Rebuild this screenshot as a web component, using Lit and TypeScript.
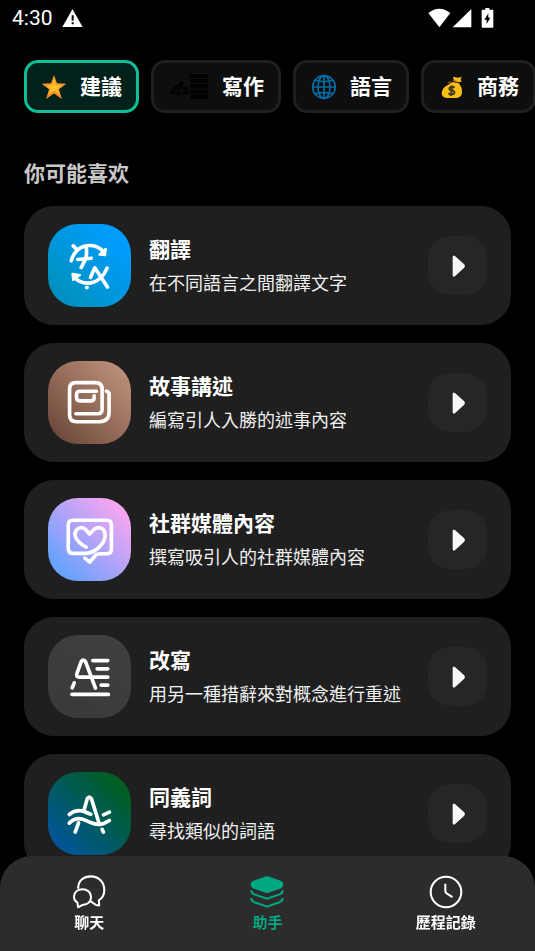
import { LitElement, html, svg, css, TemplateResult } from "lit";
import { customElement, property, state } from "lit/decorators.js";
import { classMap } from "lit/directives/class-map.js";

const starIcon = html`<svg width="25" height="25" viewBox="125 223 75 75" aria-hidden="true">
  <path d="M164 226 L173 251 L201 252 L179 269 L187 297 L164 281 L141 297 L149 269 L127 252 L155 251 Z" fill="#f19a2c"/>
  <path d="M164 240 L170 257 L187 258 L174 268 L179 284 L164 275 L149 284 L154 268 L141 258 L158 257 Z" fill="#fdc02a"/>
  <path d="M187 297 L164 281 L141 297 L144 287 L164 274 L184 287 Z" fill="#fb8c1e"/>
</svg>`;

const writingIcon = html`<svg width="40" height="25" viewBox="504 222 120 75" aria-hidden="true">
  <g fill="none" stroke="#010101" stroke-width="5" stroke-linejoin="round" stroke-linecap="round">
    <path d="M512 280 L546 246 M515 272 Q524 258 536 258 L551 263 L562 264 L562 280 L549 280 L541 283 L521 282 Q530 274 540 274 M529 268 L541 267 M552 264 V279"/>
    <path d="M536 254 L544 245 L550 250 L540 260" fill="#010101"/>
  </g>
  <path d="M571 222h53v12h-53z M571 237h53v12h-53z M571 253h53v12h-53z M571 269h53v12h-53z M571 284h53v12h-53z" fill="#010101"/>
</svg>`;

const globeIcon = html`<svg width="26" height="26" viewBox="136 222 78 78" aria-hidden="true">
  <g fill="none" stroke="#066ba3" stroke-width="5">
    <circle cx="178" cy="261" r="34"/>
    <ellipse cx="178" cy="261" rx="18" ry="34"/>
    <path d="M178 227v68 M144 261h68 M150 240q28 10 56 0 M150 282q28 -10 56 0"/>
  </g>
</svg>`;

const moneyIcon = html`<svg width="25" height="25" viewBox="519 222 75 75" aria-hidden="true">
  <path d="M564 230 L580 233 L590 230 L587 239 L590 246 L577 247 L567 243 Z" fill="#f4b81e"/>
  <path d="M562 246 L581 250 Q592 261 591 279 Q589 293 574 294 L545 294 Q530 292 530 279 Q532 261 550 254 Z" fill="#fdbf14"/>
  <path d="M562 240 L577 247 M548 249 L558 246" fill="none" stroke="#8a4c25" stroke-width="4"/>
  <path d="M569 263 Q561 258 555 262 Q549 269 560 271 Q572 274 567 281 Q560 286 550 280 M562 256 L557 288" fill="none" stroke="#463918" stroke-width="6"/>
</svg>`;

const translateArt = svg`
  <path d="M93 134 Q102 100 132 90 Q165 82 188 104 M99 89 L111 101 M138 94 Q142 115 134 133 L123 154 M113 130 L153 126"/>
  <path d="M103 184 Q118 203 150 201 Q184 196 201 156 M151 184 L164 155 L202 213"/>
  <path d="M178 115 L197 98 L195 117 Z M97 173 L119 177 L99 191 Z" fill="#fff" stroke-width="7"/>
  <path d="M140 214 v0.1" stroke-width="12"/>`;

const storyArt = svg`
  <path d="M107 182 H173 Q186 181 186 168 V108 Q186 88 166 88 H107 Q88 88 88 108 V187 Q89 206 109 206 H178 Q207 204 207 178 V122 Q207 116 199 114"/>
  <path d="M169 114 H119 Q109 114 109 123 V134 Q109 143 119 143 H154 Q162 143 162 134 V128"/>`;

const socialArt = svg`
  <path d="M134 204 L149 216 L165 197 Q169 191 179 191 H199 Q214 190 214 177 V104 Q214 90 200 90 H98 Q84 90 84 104 V174 Q84 190 100 190 H138 Q163 188 181 167 C201 144 197 124 187 116 Q170 104 148 132 Q130 103 112 116 C96 131 106 154 138 171"/>`;

const rewriteArt = svg`
  <path d="M95 202 H205 M96 182 L102 167 M158 100 H203 M171 125 H203 M183 174 H203 M203 150 H118 Q106 150 110 139 L123 103 Q129 94 136 103 L166 183"/>`;

const synonymArt = svg`
  <path d="M87 151 Q108 134 132 142 Q145 148 152 150 M190 152 L208 144"/>
  <path d="M87 177 Q105 159 127 165 L153 176 Q180 188 208 169"/>
  <path d="M132 136 L141 104 Q147 93 154 104 L178 181 M186 196 L190 204 M115 176 L105 204"/>`;

interface Category {
  label: string;
  icon: TemplateResult;
}

interface Assistant {
  title: string;
  text: string;
  tone: string;
  art: unknown;
}

const categories: Category[] = [
  { label: "建議", icon: starIcon },
  { label: "寫作", icon: writingIcon },
  { label: "語言", icon: globeIcon },
  { label: "商務", icon: moneyIcon },
];

const assistants: Assistant[] = [
  { title: "翻譯", text: "在不同語言之間翻譯文字", tone: "blue", art: translateArt },
  { title: "故事講述", text: "編寫引人入勝的述事內容", tone: "brown", art: storyArt },
  { title: "社群媒體內容", text: "撰寫吸引人的社群媒體內容", tone: "violet", art: socialArt },
  { title: "改寫", text: "用另一種措辭來對概念進行重述", tone: "gray", art: rewriteArt },
  { title: "同義詞", text: "尋找類似的詞語", tone: "green", art: synonymArt },
];

@customElement("status-bar")
export class StatusBar extends LitElement {
  static styles = css`
    :host {
      display: flex;
      align-items: center;
      gap: 9px;
      height: 36px;
      padding: 0 41px 0 12px;
      color: #fff;
      font: 400 21px/24px Roboto, sans-serif;
    }
    .signals { margin-left: auto; }
    svg { display: block; }
  `;

  render() {
    return html`
      <span>4:30</span>
      <svg width="21" height="18" viewBox="186 26 61 54" aria-hidden="true">
        <path d="M216.500 26 L247 80 H186 Z" fill="#fff"/>
        <path d="M214 45h6v16h-6z M214 66h6v6h-6z" fill="#000"/>
      </svg>
      <svg class="signals" width="66" height="21" viewBox="490 22 198 63" aria-hidden="true">
        <path d="M491 37 Q524 11 557 37 L524 80 Z M620 25 V80 H564 Z" fill="#fff"/>
        <path d="M662 22h12v5h9q3 0 3 3v48q0 3-3 3h-29q-3 0-3-3v-48q0-3 3-3h8z" fill="#fff"/>
        <path d="M671 38 L659 57 H666 V70 L677 51 H671 Z" fill="#000"/>
      </svg>
    `;
  }
}

@customElement("assistant-card")
export class AssistantCard extends LitElement {
  @property({ attribute: false }) item!: Assistant;

  static styles = css`
    :host {
      display: flex;
      align-items: center;
      gap: 18px;
      padding: 18px 24px;
      border-radius: 30px;
      background: #1f1f1f;
    }
    .tile {
      flex: none;
      width: 83px;
      height: 83px;
      border-radius: 30px;
    }
    .tile svg { display: block; width: 100%; height: 100%; }
    .blue { background: linear-gradient(45deg, #0091c0 15%, #009dff 85%); }
    .brown { background: linear-gradient(45deg, #6f4a3b 10%, #bb8f79 90%); }
    .violet { background: linear-gradient(45deg, #6aa2ff 15%, #f3a5f0 85%); }
    .gray { background: linear-gradient(30deg, #393939, #404040); }
    .green { background: linear-gradient(45deg, #005694 15%, #005f22 85%); }
    .copy { flex: 1; min-width: 0; padding-bottom: 4px; }
    h2, p { margin: 0; white-space: nowrap; }
    h2 { color: #fff; font-size: 21px; font-weight: 700; line-height: 32px; }
    p { margin-top: 4px; color: #f0f0f0; font-size: 18px; line-height: 28px; }
    button {
      display: grid;
      place-items: center;
      flex: none;
      width: 59px;
      height: 59px;
      padding: 0;
      border: 0;
      border-radius: 22px;
      background: #262626;
    }
  `;

  render() {
    const { title, text, tone, art } = this.item;
    return html`
      <div class="tile ${tone}">
        <svg viewBox="23 23 250 250" fill="none" stroke="#fff" stroke-width="11" stroke-linecap="round" stroke-linejoin="round" aria-hidden="true">${art}</svg>
      </div>
      <div class="copy">
        <h2>${title}</h2>
        <p>${text}</p>
      </div>
      <button type="button" aria-label=${title}>
        <svg width="21" height="24" viewBox="142 160 63 72" aria-hidden="true">
          <path d="M163 169 V224 L191 198 Q193 196 191 194 Z" fill="#f7f7f7" stroke="#f7f7f7" stroke-width="8" stroke-linejoin="round"/>
        </svg>
      </button>
    `;
  }
}

@customElement("tab-bar")
export class TabBar extends LitElement {
  @state() private current = 1;

  static styles = css`
    :host {
      display: block;
      border-radius: 32px 32px 0 0;
      background: #2c2c2c;
    }
    nav { display: grid; grid-template-columns: repeat(3, 1fr); }
    button {
      display: flex;
      flex-direction: column;
      align-items: center;
      gap: 2px;
      padding: 19px 0 18px;
      border: 0;
      background: none;
      color: #fff;
      font: inherit;
      font-size: 15px;
      font-weight: 700;
      line-height: 22px;
    }
    .current { color: #00a884; }
    svg { display: block; }
  `;

  private tabs = [
    {
      label: "聊天",
      icon: html`<svg width="34" height="34" viewBox="211 105 100 100" fill="none" stroke="currentColor" stroke-width="6" stroke-linejoin="round" stroke-linecap="round" aria-hidden="true">
        <path d="M229 143 C230 121 246 109 266 109 C290 109 306 126 306 149 C306 164 300 173 290 179 L291 195 L281 193 L265 182"/>
        <path d="M229 200 L227 186 C219 181 216 175 217 168 C218 154 229 147 242 147 C256 147 267 156 267 169 C267 184 257 192 242 193 Z"/>
      </svg>`,
    },
    {
      label: "助手",
      icon: html`<svg width="34" height="34" viewBox="734 105 100 100" fill="none" stroke="currentColor" stroke-width="6" stroke-linejoin="round" aria-hidden="true">
        <path d="M784 108 L824 122 Q833 126 832 134 Q832 141 824 145 L784 159 L744 145 Q736 141 736 134 Q735 126 744 122 Z" fill="currentColor" stroke="none"/>
        <path d="M738 150 Q738 159 747 162 L784 175 L821 162 Q830 159 830 150 M738 173 Q738 182 747 185 L784 198 L821 185 Q830 182 830 173"/>
      </svg>`,
    },
    {
      label: "歷程記錄",
      icon: html`<svg width="34" height="34" viewBox="1257 105 100 100" fill="none" stroke="currentColor" stroke-width="6" aria-hidden="true">
        <circle cx="1307" cy="155" r="45"/>
        <path d="M1305 131 V151 Q1305 157 1310 160 L1326 170"/>
      </svg>`,
    },
  ];

  render() {
    return html`<nav>
      ${this.tabs.map(
        (tab, i) => html`<button
          type="button"
          class=${classMap({ current: i === this.current })}
          @click=${() => (this.current = i)}
        >${tab.icon}<span>${tab.label}</span></button>`
      )}
    </nav>`;
  }
}

@customElement("app-root")
export class AppRoot extends LitElement {
  @state() private selected = 0;

  static styles = css`
    :host {
      display: flex;
      flex-direction: column;
      height: 100vh;
      overflow: hidden;
      background: #000;
      font-family: "Noto Sans CJK TC", "Noto Sans CJK SC", sans-serif;
    }
    status-bar { flex: none; }
    .chips {
      display: flex;
      flex: none;
      gap: 12px;
      margin-top: 24px;
      padding: 0 24px;
      overflow-x: auto;
      scrollbar-width: none;
    }
    .chip {
      display: flex;
      flex: none;
      align-items: center;
      gap: 14px;
      height: 53px;
      padding: 0 14px;
      border: 3px solid #1f1f1f;
      border-radius: 14px;
      background: #0e0e0e;
      color: #fff;
      font: inherit;
      font-size: 21px;
      font-weight: 700;
      line-height: 32px;
      white-space: nowrap;
    }
    .chip.selected { border-color: #0fbf98; background: #02211b; }
    .chip span { padding-bottom: 4px; }
    main {
      flex: 1;
      min-height: 0;
      padding: 43px 24px 120px;
      overflow-y: auto;
      scrollbar-width: none;
    }
    h1 {
      margin: 0 0 18px;
      color: #c8c8c8;
      font-size: 21px;
      font-weight: 700;
      line-height: 32px;
    }
    .list { display: grid; gap: 18px; }
    tab-bar { position: fixed; right: 0; bottom: 0; left: 0; }
  `;

  render() {
    return html`
      <status-bar></status-bar>
      <div class="chips">
        ${categories.map(
          (c, i) => html`<button
            type="button"
            class=${classMap({ chip: true, selected: i === this.selected })}
            @click=${() => (this.selected = i)}
          >${c.icon}<span>${c.label}</span></button>`
        )}
      </div>
      <main>
        <h1 lang="zh-Hans">你可能喜欢</h1>
        <div class="list">
          ${assistants.map((a) => html`<assistant-card .item=${a}></assistant-card>`)}
        </div>
      </main>
      <tab-bar></tab-bar>
    `;
  }
}
